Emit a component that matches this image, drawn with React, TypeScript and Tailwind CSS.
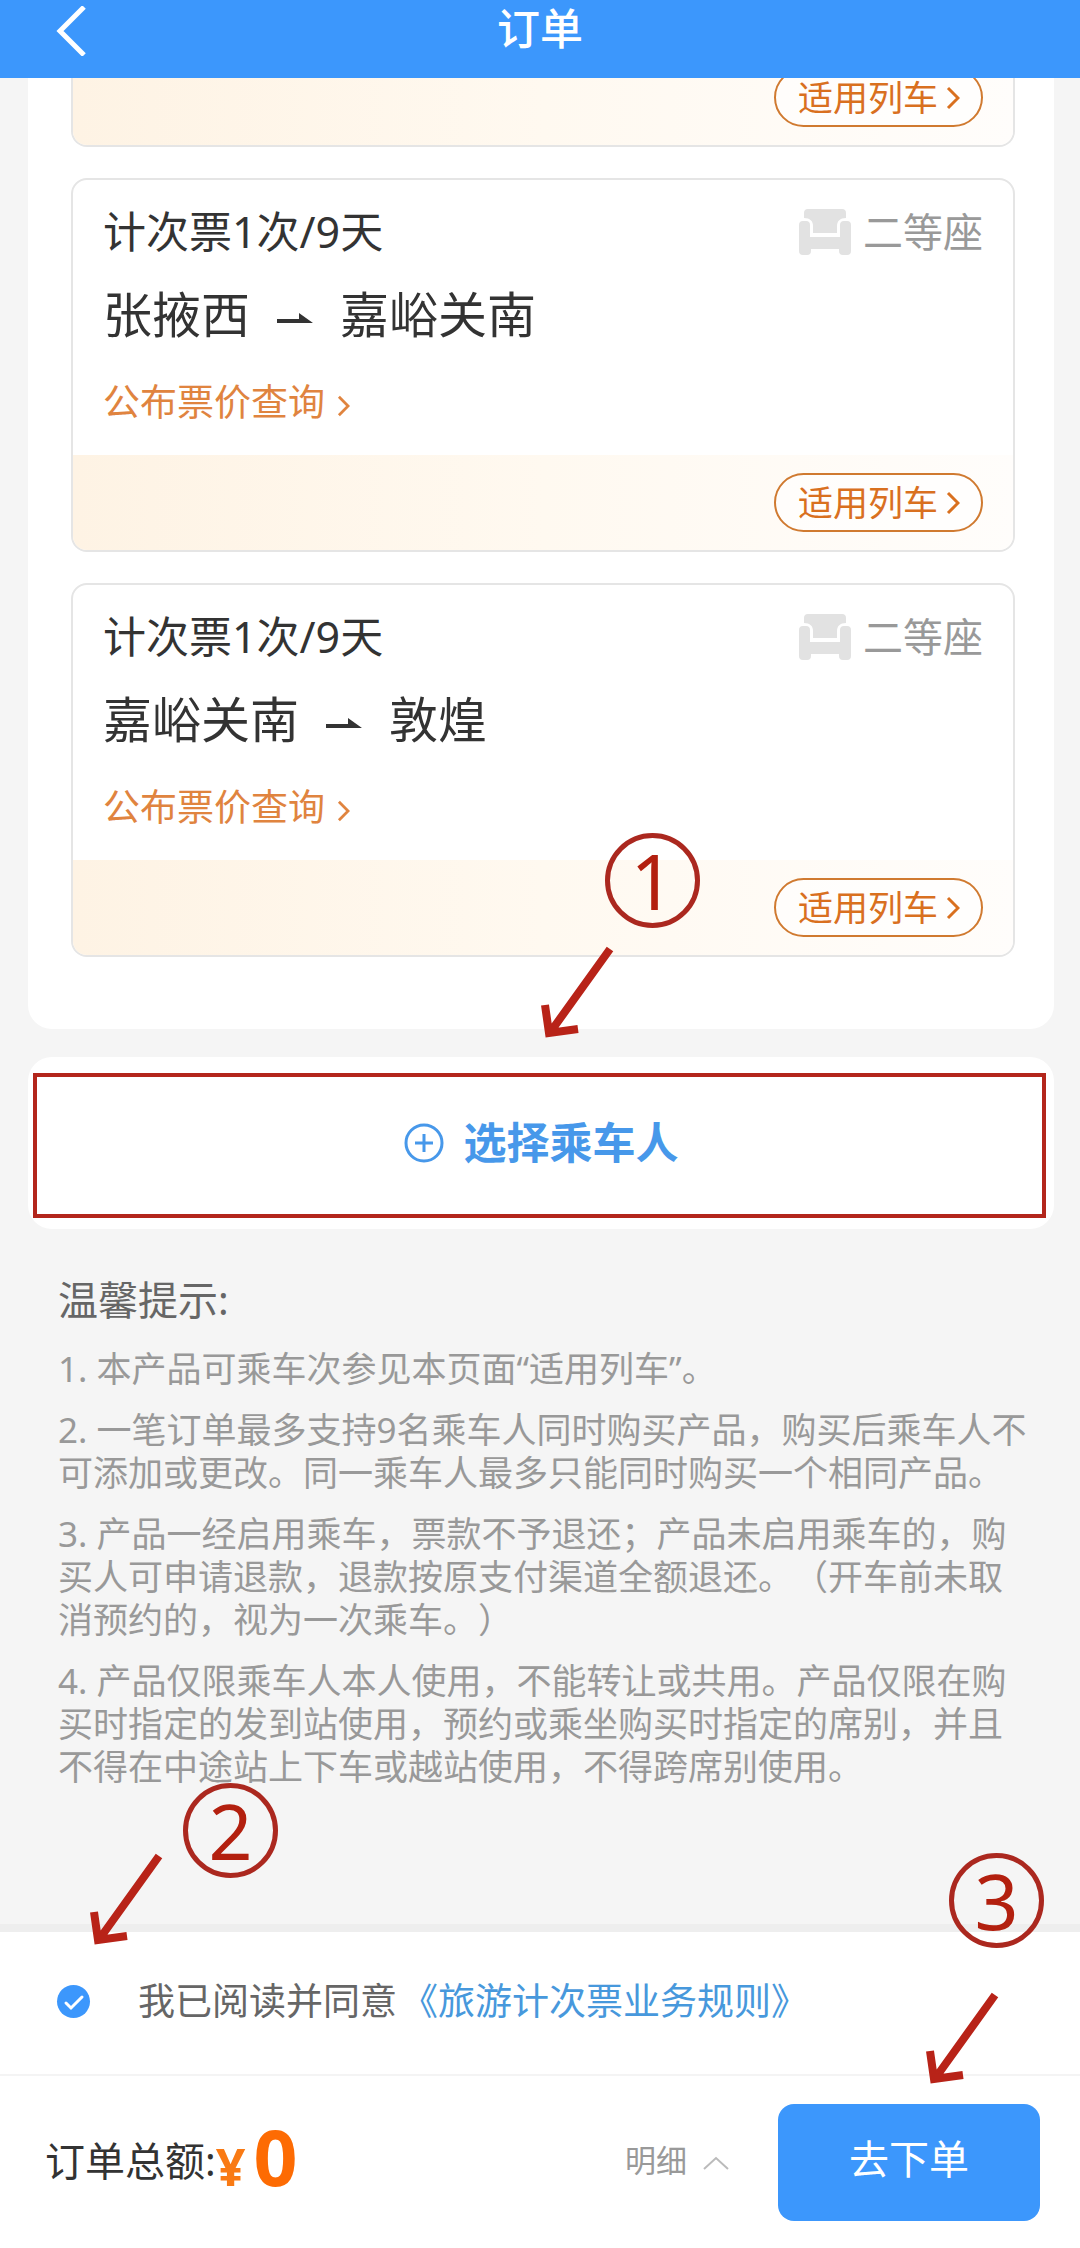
import { useState } from "react";

const tickets = [
    { name: "计次票1次/9天", seat: "二等座", from: "张掖西", to: "嘉峪关南" },
    { name: "计次票1次/9天", seat: "二等座", from: "嘉峪关南", to: "敦煌" },
];

const tips = [
    "1. 本产品可乘车次参见本页面“适用列车”。",
    "2. 一笔订单最多支持9名乘车人同时购买产品，购买后乘车人不可添加或更改。同一乘车人最多只能同时购买一个相同产品。",
    "3. 产品一经启用乘车，票款不予退还；产品未启用乘车的，购买人可申请退款，退款按原支付渠道全额退还。（开车前未取消预约的，视为一次乘车。）",
    "4. 产品仅限乘车人本人使用，不能转让或共用。产品仅限在购买时指定的发到站使用，预约或乘坐购买时指定的席别，并且不得在中途站上下车或越站使用，不得跨席别使用。",
];

const Chevron = ({ className }: { className: string }) => (
    <svg viewBox="0 0 14 24" fill="none" stroke="currentColor" strokeWidth="3" className={className} aria-hidden="true">
        <path d="M2 2l10 10L2 22" />
    </svg>
);

const SeatIcon = () => (
    <svg viewBox="0 0 52 46" fill="#e2e2e2" className="h-[46px] w-[52px]" aria-hidden="true">
        <path d="M9 0h34a4 4 0 0 1 4 4v5c-6 0-9 3-9 8v7H14v-7c0-5-3-8-9-8V4a4 4 0 0 1 4-4z" />
        <path d="M4 12h3a4 4 0 0 1 4 4v12h30V16a4 4 0 0 1 4-4h3a4 4 0 0 1 4 4v26a4 4 0 0 1-4 4h-4a4 4 0 0 1-4-4v-2H12v2a4 4 0 0 1-4 4H4a4 4 0 0 1-4-4V16a4 4 0 0 1 4-4z" />
    </svg>
);

const TrainStrip = () => (
    <div className="flex justify-end bg-gradient-to-r from-[#fef3e4] via-[#fff9f0] to-[#fffdfb] px-[30px] py-[18px]">
        <button
            type="button"
            className="flex items-center gap-2 rounded-full border-2 border-[#d07a30] bg-white/60 pl-[22px] pr-[21px] text-[35px] leading-[55px] text-[#d9701f]"
        >
            适用列车
            <Chevron className="h-6 w-[14px]" />
        </button>
    </div>
);

const TicketCard = ({ ticket }: { ticket: (typeof tickets)[number] }) => (
    <article className="overflow-hidden rounded-2xl border-2 border-[#e5e5e5]">
        <div className="px-[30px] pb-[31px] pt-6">
            <div className="flex items-center justify-between leading-[56px]">
                <h2 className="text-[43px] text-[#333]">{ticket.name}</h2>
                <div className="flex items-center gap-3 text-[40px] text-[#999]">
                    <SeatIcon />
                    {ticket.seat}
                </div>
            </div>
            <div className="mt-6 flex items-center gap-[27px] text-[49px] leading-[60px] text-[#333]">
                <span>{ticket.from}</span>
                <svg viewBox="0 0 36 12" fill="currentColor" className="mt-2 h-3 w-9" aria-hidden="true">
                    <path d="M0 7h22V1l14 10H0z" />
                </svg>
                <span>{ticket.to}</span>
            </div>
            <a href="#fares" className="mt-9 flex w-fit items-center gap-3 text-[37px] leading-[44px] text-[#e0843f]">
                公布票价查询
                <Chevron className="mt-2 h-[22px] w-[13px]" />
            </a>
        </div>
        <TrainStrip />
    </article>
);

// step markers that lie over the page
const StepNumber = ({ n, className }: { n: number; className: string }) => (
    <div
        className={`pointer-events-none absolute flex size-[95px] items-center justify-center rounded-full border-[5px] border-[#ab281f] text-[77px] leading-[85px] text-[#b3200f] ${className}`}
    >
        {n}
    </div>
);

const StepArrow = ({ className }: { className: string }) => (
    <svg
        viewBox="0 0 76 96"
        fill="none"
        stroke="#b82318"
        strokeWidth="8"
        className={`pointer-events-none absolute h-24 w-[76px] ${className}`}
        aria-hidden="true"
    >
        <path d="M71 4L10 89M6 60l4 28 29-4" />
    </svg>
);

const App = () => {
    const [agreed, setAgreed] = useState(true);

    return (
        <div
            lang="zh-CN"
            className="flex min-h-screen flex-col bg-[#f5f5f5] font-['Noto_Sans','Noto_Sans_CJK_SC',sans-serif] [text-spacing-trim:space-all]"
        >
            <header className="sticky top-0 z-10 grid grid-cols-[1fr_auto_1fr] items-start bg-[#3c97fc] pb-5 text-white">
                <button type="button" aria-label="返回" className="ml-[55px] mt-1.5 w-fit">
                    <svg viewBox="0 0 32 50" fill="none" stroke="currentColor" strokeWidth="5" className="h-[50px] w-8">
                        <path d="M29 1L5 25l24 24" />
                    </svg>
                </button>
                <h1 className="text-[43px] font-medium leading-[58px]">订单</h1>
            </header>

            <main>
                <section className="-mt-7 ml-7 mr-[26px] flex flex-col gap-[31px] rounded-b-3xl bg-white pb-[72px] pl-[43px] pr-[39px]">
                    <div className="overflow-hidden rounded-b-2xl border-2 border-t-0 border-[#e5e5e5]">
                        <TrainStrip />
                    </div>
                    {tickets.map((ticket) => (
                        <TicketCard key={ticket.from} ticket={ticket} />
                    ))}
                </section>

                <section className="relative ml-7 mr-[26px] mt-7 rounded-3xl bg-white">
                    <button
                        type="button"
                        className="flex w-full items-center justify-center gap-5 py-[56px] text-[43px] font-bold leading-[60px] text-[#4798ea]"
                    >
                        <svg viewBox="0 0 40 40" fill="none" stroke="currentColor" strokeWidth="3" className="size-10" aria-hidden="true">
                            <circle cx="20" cy="20" r="18" />
                            <path d="M20 11v18M11 20h18" />
                        </svg>
                        选择乘车人
                    </button>
                    <div className="pointer-events-none absolute bottom-[11px] left-[5px] right-2 top-4 border-4 border-[#b3261c]" />
                    <StepNumber n={1} className="-top-[224px] left-[577px]" />
                    <StepArrow className="-top-[112px] left-[511px]" />
                </section>

                <section className="pb-[134px] pl-[58px] pr-11 pt-[46px]">
                    <h2 className="text-[40px] leading-[50px] text-[#666]">温馨提示:</h2>
                    <div className="mt-[22px] flex flex-col gap-[18px] text-[35px] leading-[43px] text-[#999]">
                        {tips.map((tip) => (
                            <p key={tip}>{tip}</p>
                        ))}
                    </div>
                </section>
            </main>

            <footer className="relative mt-auto border-t-8 border-[#eee] bg-white">
                <div className="flex items-center border-b-2 border-[#f4f4f4] pb-12 pl-[57px] pt-11 text-[37px] leading-[50px]">
                    <label className="flex items-center text-[#666]">
                        <span className="relative mr-12 size-[33px]">
                            <input
                                type="checkbox"
                                checked={agreed}
                                onChange={(e) => setAgreed(e.target.checked)}
                                className="block size-full appearance-none rounded-full border-2 border-[#ccc] checked:border-0 checked:bg-[#3c97fc]"
                            />
                            {agreed && (
                                <svg
                                    viewBox="0 0 33 33"
                                    fill="none"
                                    stroke="white"
                                    strokeWidth="3"
                                    strokeLinecap="round"
                                    className="pointer-events-none absolute inset-0"
                                    aria-hidden="true"
                                >
                                    <path d="M9 18l5 5 11-11" />
                                </svg>
                            )}
                        </span>
                        我已阅读并同意
                    </label>
                    <a href="#rules" className="ml-1 text-[#4798dc]">
                        《旅游计次票业务规则》
                    </a>
                </div>

                <div className="flex items-center justify-between pb-[27px] pl-[45px] pr-10 pt-7">
                    <div className="flex items-center pb-1 leading-[61px]">
                        <span className="text-[40px] text-[#333]">订单总额:</span>
                        <span className="flex items-baseline font-bold">
                            <span className="text-[52px] text-[#f97a14]">¥</span>
                            <span className="ml-2 text-[77px] text-[#fd6b03]">0</span>
                        </span>
                    </div>
                    <div className="flex items-center gap-[49px]">
                        <button type="button" className="flex items-center gap-4 pb-1 text-[31px] text-[#999]">
                            明细
                            <svg viewBox="0 0 26 14" fill="none" stroke="#bbb" strokeWidth="2" className="mt-1 h-[14px] w-[26px]" aria-hidden="true">
                                <path d="M1 13L13 2l12 11" />
                            </svg>
                        </button>
                        <button
                            type="button"
                            className="rounded-2xl bg-[#3c97fc] px-[71px] pb-8 pt-6 text-[40px] leading-[61px] text-white"
                        >
                            去下单
                        </button>
                    </div>
                </div>

                <StepNumber n={2} className="-top-[149px] left-[183px]" />
                <StepArrow className="-top-[80px] left-[88px]" />
                <StepNumber n={3} className="-top-[79px] right-[36px]" />
                <StepArrow className="right-[80px] top-[59px]" />
            </footer>
        </div>
    );
};

export default App;
